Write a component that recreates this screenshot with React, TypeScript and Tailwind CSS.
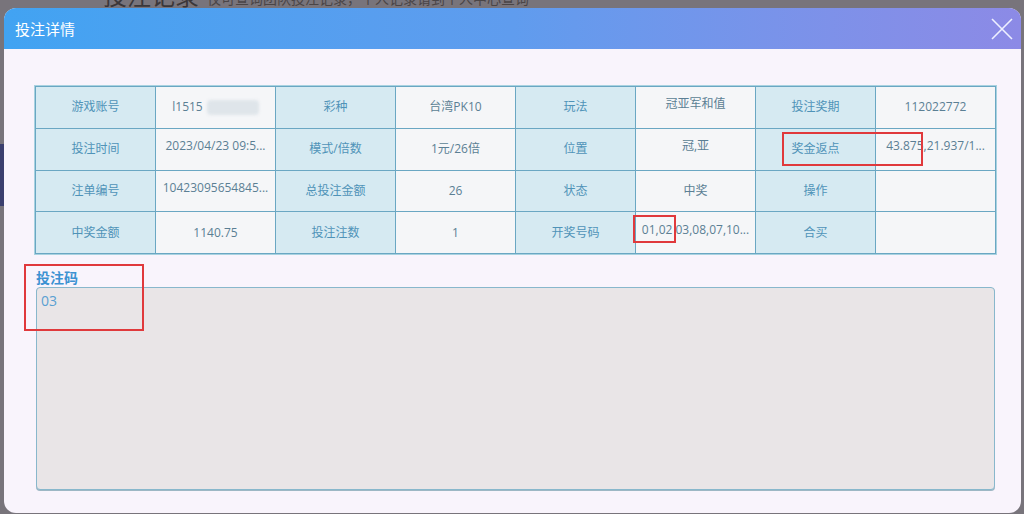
import React from "react";

type Cell = { t: React.ReactNode; label?: boolean; up?: boolean };

const L = (t: string): Cell => ({ t, label: true });
const V = (t: React.ReactNode, up = false): Cell => ({ t, up });

const rows: Cell[][] = [
  [
    L("游戏账号"),
    V(
      <span className="inline-flex items-center">
        <span>l1515</span>
        <span className="ml-[4px] inline-block w-[52px] h-[15px] rounded-[4px] bg-[#dfe5ea] blur-[1.5px]" />
      </span>
    ),
    L("彩种"),
    V("台湾PK10"),
    L("玩法"),
    V("冠亚军和值", true),
    L("投注奖期"),
    V("112022772"),
  ],
  [
    L("投注时间"),
    V("2023/04/23 09:5...", true),
    L("模式/倍数"),
    V("1元/26倍"),
    L("位置"),
    V("冠,亚", true),
    L("奖金返点"),
    V("43.875,21.937/1...", true),
  ],
  [
    L("注单编号"),
    V("10423095654845...", true),
    L("总投注金额"),
    V("26"),
    L("状态"),
    V("中奖"),
    L("操作"),
    V(""),
  ],
  [
    L("中奖金额"),
    V("1140.75"),
    L("投注注数"),
    V("1"),
    L("开奖号码"),
    V("01,02 03,08,07,10...", true),
    L("合买"),
    V(""),
  ],
];

export default function App() {
  return (
    <div
      className="relative w-[1024px] h-[514px] overflow-hidden bg-[#78747b]"
      style={{ fontFamily: '"Open Sans", "Noto Sans CJK SC", sans-serif' }}
    >
      {/* background page (under overlay) */}
      <div className="flex items-end gap-[8px] pl-[103px] -mt-[19px] h-[30px] text-[#3b3739]">
        <span className="text-[24px] leading-[30px]">投注记录</span>
        <span className="text-[14px] leading-[24px] text-[#4a4547]">
          仅可查询团队投注记录，个人记录请到个人中心查询
        </span>
      </div>
      <div className="mt-[133px] w-[4px] h-[62px] bg-[#3b3f6e]" />

      {/* modal */}
      <div className="absolute left-[4px] top-[8px] w-[1017px] h-[505px] rounded-[12px] overflow-hidden bg-[#f9f4fc] flex flex-col">
        <div className="h-[41px] shrink-0 bg-gradient-to-r from-[#41a3f2] via-[#5f9cee] to-[#8c8ae6] flex items-center justify-between pl-[11px] pr-[8px]">
          <span className="text-white text-[15px] leading-[20px]">投注详情</span>
          <svg width="22" height="22" viewBox="0 0 22 22">
            <path d="M1 1 L21 21 M21 1 L1 21" stroke="#eef0ff" strokeWidth="1.6" fill="none" />
          </svg>
        </div>

        <div className="flex flex-col pl-[31px] pt-[37px]">
          <div className="relative w-[961px] grid grid-cols-[repeat(8,120px)] border-t border-l border-[#6aa7c3] outline outline-1 outline-[#a9d2e0]">
            {rows.flat().map((c, i) => (
              <div
                key={i}
                className={
                  "h-[41.75px] border-r border-b border-[#6aa7c3] flex justify-center px-[4px] text-[12px] whitespace-nowrap overflow-hidden " +
                  (c.label
                    ? "bg-[#d6eaf2] text-[#4f93b8] items-center"
                    : "bg-[#f5f6f8] text-[#5b7f94] items-center") +
                  (c.up ? " pb-[6px]" : "")
                }
              >
                {c.t}
              </div>
            ))}
            {/* annotation boxes */}
            <div className="absolute left-[746px] top-[45px] w-[141px] h-[34px] border-2 border-[#e0393c]" />
            <div className="absolute left-[597px] top-[128px] w-[43px] h-[28px] border-2 border-[#e0393c]" />
          </div>

          <div className="relative">
            <div className="mt-[15px] pl-[1px] text-[14px] leading-[18px] font-bold text-[#3d92d2]">投注码</div>
            <div className="ml-[1px] w-[959px] h-[203px] rounded-[4px] border border-[#88b7cc] bg-[#e9e5e7] shadow-[0_1px_0_#9db7c4] pt-[3px] pl-[4px] text-[14px] leading-[20px] text-[#5aa0d2]">
              03
            </div>
            <div className="absolute -left-[11px] top-[10px] w-[120px] h-[67px] border-2 border-[#e0393c]" />
          </div>
        </div>
      </div>
    </div>
  );
}
